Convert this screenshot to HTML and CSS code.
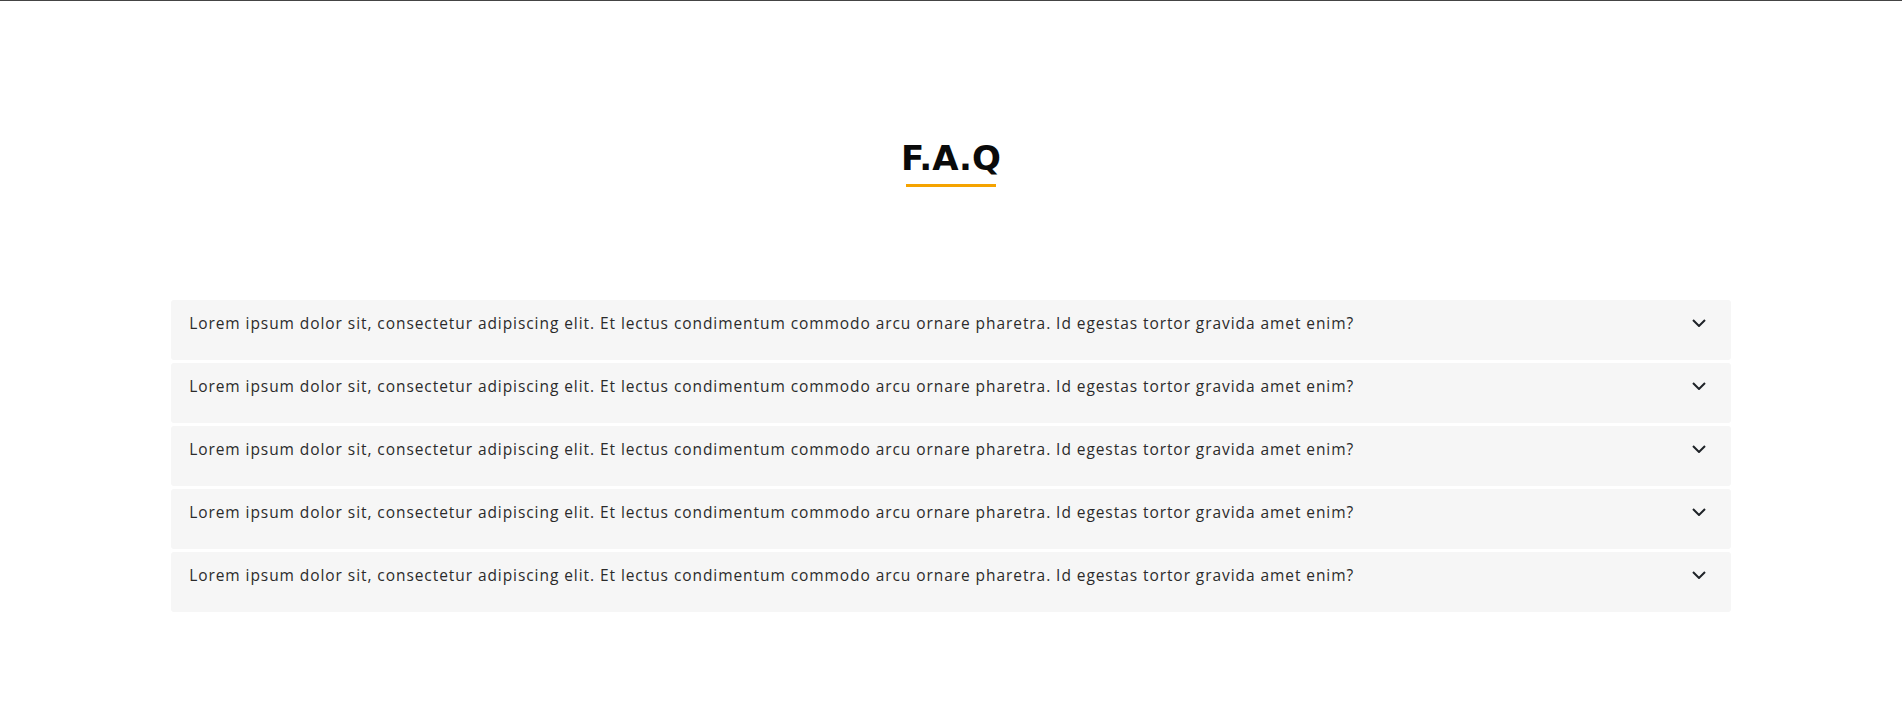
FILE: index.html
```html
<!DOCTYPE html>
<html lang="en">
<head>
<meta charset="utf-8">
<title>F.A.Q</title>
<link rel="stylesheet" href="styles.css">
</head>
<body>
<div class="topline"></div>
<section class="faq">
  <div class="faq-head">
    <h2 class="faq-title">F.A.Q</h2>
    <span class="faq-bar"></span>
  </div>
  <div class="faq-list">
    <div class="faq-item">
      <p class="faq-q">Lorem ipsum dolor sit, consectetur adipiscing elit. Et lectus condimentum commodo arcu ornare pharetra. Id egestas tortor gravida amet enim?</p>
      <svg class="chev" viewBox="0 0 14 8" width="14" height="8"><path d="M1 1 L7 7 L13 1" fill="none" stroke="#1f2328" stroke-width="2"/></svg>
    </div>
    <div class="faq-item">
      <p class="faq-q">Lorem ipsum dolor sit, consectetur adipiscing elit. Et lectus condimentum commodo arcu ornare pharetra. Id egestas tortor gravida amet enim?</p>
      <svg class="chev" viewBox="0 0 14 8" width="14" height="8"><path d="M1 1 L7 7 L13 1" fill="none" stroke="#1f2328" stroke-width="2"/></svg>
    </div>
    <div class="faq-item">
      <p class="faq-q">Lorem ipsum dolor sit, consectetur adipiscing elit. Et lectus condimentum commodo arcu ornare pharetra. Id egestas tortor gravida amet enim?</p>
      <svg class="chev" viewBox="0 0 14 8" width="14" height="8"><path d="M1 1 L7 7 L13 1" fill="none" stroke="#1f2328" stroke-width="2"/></svg>
    </div>
    <div class="faq-item">
      <p class="faq-q">Lorem ipsum dolor sit, consectetur adipiscing elit. Et lectus condimentum commodo arcu ornare pharetra. Id egestas tortor gravida amet enim?</p>
      <svg class="chev" viewBox="0 0 14 8" width="14" height="8"><path d="M1 1 L7 7 L13 1" fill="none" stroke="#1f2328" stroke-width="2"/></svg>
    </div>
    <div class="faq-item">
      <p class="faq-q">Lorem ipsum dolor sit, consectetur adipiscing elit. Et lectus condimentum commodo arcu ornare pharetra. Id egestas tortor gravida amet enim?</p>
      <svg class="chev" viewBox="0 0 14 8" width="14" height="8"><path d="M1 1 L7 7 L13 1" fill="none" stroke="#1f2328" stroke-width="2"/></svg>
    </div>
  </div>
</section>
</body>
</html>
```
FILE: styles.css
```css
* { box-sizing: border-box; }
html, body { margin: 0; padding: 0; background: #fff; }
body { font-family: "Open Sans", "DejaVu Sans", sans-serif; color: #2b2b2b; }
.topline { border-top: 1px solid #444; }
.faq { padding-top: 137px; }
.faq-head { display: flex; flex-direction: column; align-items: center; }
.faq-title {
  margin: 0;
  font-family: "DejaVu Sans", sans-serif;
  font-weight: 700;
  font-size: 34px;
  line-height: 40px;
  color: #0a0a0a;
}
.faq-bar { display: block; width: 90px; height: 3px; background: #f5a300; margin-top: 6px; }
.faq-list {
  width: 82%;
  margin: 113px auto 0;
  display: flex;
  flex-direction: column;
  gap: 3px;
}
.faq-item {
  height: 60px;
  background: #f6f6f6;
  border-radius: 3px;
  display: flex;
  align-items: flex-start;
  justify-content: space-between;
  padding: 12px 25px 0 18px;
}
.faq-q {
  margin: 0;
  font-size: 15.5px;
  line-height: 22px;
  letter-spacing: 0.93px;
  color: #2b2b2b;
}
.chev { margin-top: 7px; flex: none; }
```
